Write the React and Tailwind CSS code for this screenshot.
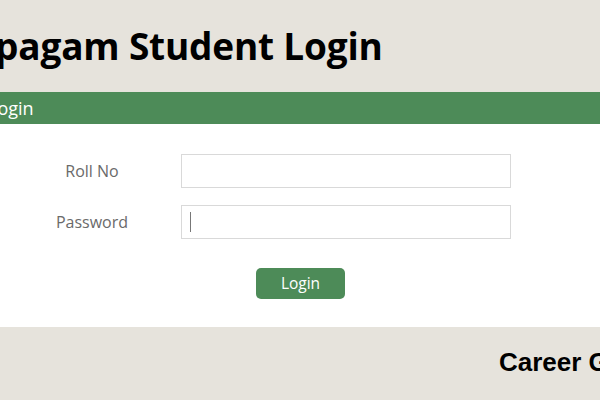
export default function App() {
  return (
    <div className="w-[600px] h-[400px] overflow-hidden bg-[#e6e3dc] flex flex-col">
      {/* Page title, cropped at the left edge */}
      <div className="h-[92px] flex items-center">
        <h1 className="-ml-[68px] whitespace-nowrap text-[37px] font-bold text-black font-['Open_Sans',sans-serif] tracking-[-0.2px]">
          Karpagam Student Login
        </h1>
      </div>

      {/* Login card */}
      <div className="bg-white">
        <div className="h-[32px] bg-[#4d8b58] flex items-center pt-[1px]">
          <span className="-ml-[12px] text-white text-[18px] font-['Open_Sans',sans-serif]">Login</span>
        </div>
        <div className="h-[203px] pt-[30px] font-['Open_Sans',sans-serif]">
          <div className="flex items-center h-[34px]">
            <label className="w-[181px] pl-[3px] text-center text-[16px] text-[#6a6a6a]">Roll No</label>
            <input className="w-[330px] h-[34px] border border-[#d9d9d9] outline-none" />
          </div>
          <div className="flex items-center h-[34px] mt-[17px]">
            <label className="w-[181px] pl-[3px] text-center text-[16px] text-[#6a6a6a]">Password</label>
            <div className="w-[330px] h-[34px] border border-[#d9d9d9] flex items-center pl-[8px]">
              <div className="w-[1px] h-[20px] bg-[#777]" />
            </div>
          </div>
          <div className="flex justify-center mt-[29px] pl-[1px]">
            <button className="w-[89px] h-[31px] rounded-[5px] bg-[#4d8b58] text-white text-[15.5px]">Login</button>
          </div>
        </div>
      </div>

      {/* Footer text */}
      <div className="flex-1 flex items-center pl-[499px] pb-[2px]">
        <span className="whitespace-nowrap text-[26px] font-bold text-black font-['Liberation_Sans',Arial,sans-serif]">
          Career Guide
        </span>
      </div>
    </div>
  );
}
